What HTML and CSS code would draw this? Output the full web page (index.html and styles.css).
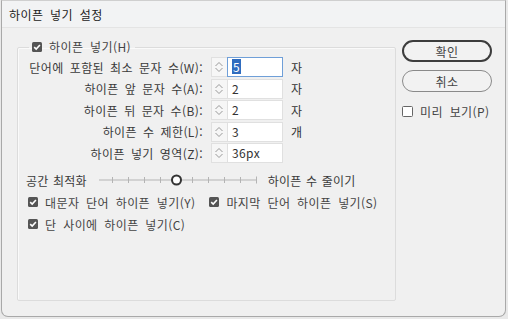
FILE: index.html
```html
<!DOCTYPE html>
<html lang="ko">
<head>
<meta charset="utf-8">
<link rel="stylesheet" href="styles.css">
</head>
<body>
<div class="dialog">
  <div class="titlebar">하이픈 넣기 설정</div>
  <div class="body">
    <fieldset class="group">
      <legend class="legend">
        <span class="cb on"><svg viewBox="0 0 10 10" width="10" height="10"><rect x="0" y="0" width="10" height="10" rx="1.5" fill="#555"/><path d="M2.2 5.2 L4.2 7.1 L7.9 3" stroke="#fff" stroke-width="1.6" fill="none"/></svg></span>
        <span>하이픈 넣기(H)</span>
      </legend>
      <div class="rows">
        <div class="row">
          <span class="lbl">단어에 포함된 최소 문자 수(W):</span>
          <span class="spin"><svg viewBox="0 0 16 20" width="16" height="20"><path d="M4.5 9 L8 5.5 L11.5 9 M4.5 11 L8 14.5 L11.5 11" stroke="#999" stroke-width="1" fill="none"/></svg></span>
          <span class="inp focus"><span class="sel">5</span></span>
          <span class="unit">자</span>
        </div>
        <div class="row">
          <span class="lbl">하이픈 앞 문자 수(A):</span>
          <span class="spin"><svg viewBox="0 0 16 20" width="16" height="20"><path d="M4.5 9 L8 5.5 L11.5 9 M4.5 11 L8 14.5 L11.5 11" stroke="#999" stroke-width="1" fill="none"/></svg></span>
          <span class="inp">2</span>
          <span class="unit">자</span>
        </div>
        <div class="row">
          <span class="lbl">하이픈 뒤 문자 수(B):</span>
          <span class="spin"><svg viewBox="0 0 16 20" width="16" height="20"><path d="M4.5 9 L8 5.5 L11.5 9 M4.5 11 L8 14.5 L11.5 11" stroke="#999" stroke-width="1" fill="none"/></svg></span>
          <span class="inp">2</span>
          <span class="unit">자</span>
        </div>
        <div class="row">
          <span class="lbl">하이픈 수 제한(L):</span>
          <span class="spin"><svg viewBox="0 0 16 20" width="16" height="20"><path d="M4.5 9 L8 5.5 L11.5 9 M4.5 11 L8 14.5 L11.5 11" stroke="#999" stroke-width="1" fill="none"/></svg></span>
          <span class="inp">3</span>
          <span class="unit">개</span>
        </div>
        <div class="row">
          <span class="lbl">하이픈 넣기 영역(Z):</span>
          <span class="spin"><svg viewBox="0 0 16 20" width="16" height="20"><path d="M4.5 9 L8 5.5 L11.5 9 M4.5 11 L8 14.5 L11.5 11" stroke="#999" stroke-width="1" fill="none"/></svg></span>
          <span class="inp">36px</span>
          <span class="unit"></span>
        </div>
      </div>
      <div class="slider-row">
        <span class="slbl">공간 최적화</span>
        <svg class="slider" viewBox="0 0 162 14" width="162" height="14">
          <path d="M1 7 H159" stroke="#b4b4b4" stroke-width="1"/>
          <path d="M14.5 4 V10 M30.5 4 V10 M46.5 4 V10 M62.5 4 V10 M94.5 4 V10 M110.5 4 V10 M126.5 4 V10 M142.5 4 V10 M158.5 3.5 V10.5" stroke="#b4b4b4" stroke-width="1"/>
          <circle cx="78.5" cy="7" r="4.5" fill="#fff" stroke="#333" stroke-width="2"/>
        </svg>
        <span class="slbl right">하이픈 수 줄이기</span>
      </div>
      <div class="checks">
        <div class="check-line">
          <span class="chk"><svg viewBox="0 0 10 10" width="10" height="10"><rect x="0" y="0" width="10" height="10" rx="1.5" fill="#555"/><path d="M2.2 5.2 L4.2 7.1 L7.9 3" stroke="#fff" stroke-width="1.6" fill="none"/></svg><span>대문자 단어 하이픈 넣기(Y)</span></span>
          <span class="chk second"><svg viewBox="0 0 10 10" width="10" height="10"><rect x="0" y="0" width="10" height="10" rx="1.5" fill="#555"/><path d="M2.2 5.2 L4.2 7.1 L7.9 3" stroke="#fff" stroke-width="1.6" fill="none"/></svg><span>마지막 단어 하이픈 넣기(S)</span></span>
        </div>
        <div class="check-line">
          <span class="chk"><svg viewBox="0 0 10 10" width="10" height="10"><rect x="0" y="0" width="10" height="10" rx="1.5" fill="#555"/><path d="M2.2 5.2 L4.2 7.1 L7.9 3" stroke="#fff" stroke-width="1.6" fill="none"/></svg><span>단 사이에 하이픈 넣기(C)</span></span>
        </div>
      </div>
    </fieldset>
    <div class="side">
      <button class="btn primary">확인</button>
      <button class="btn">취소</button>
      <span class="chk preview"><svg viewBox="0 0 11 11" width="11" height="11"><rect x="0.5" y="0.5" width="10" height="10" rx="1" fill="#fff" stroke="#666" stroke-width="1"/></svg><span>미리 보기(P)</span></span>
    </div>
  </div>
</div>
</body>
</html>
```

FILE: styles.css
```css
html, body {
  margin: 0;
  padding: 0;
  background: #e9e9e9;
}
body {
  font-family: "Noto Sans CJK KR", "Noto Sans", sans-serif;
  font-size: 12px;
  color: #3a3a3a;
  letter-spacing: 0.4px;
  word-spacing: 3px;
}
.dialog {
  box-sizing: border-box;
  width: 505px;
  height: 317px;
  margin: 0 0 0 1px;
  border: 1px solid #a9a9a9;
  border-top-color: #cfcfcf;
  border-radius: 0 0 7px 7px;
  background: #f0f0f0;
  display: flex;
  flex-direction: column;
  overflow: hidden;
}
.titlebar {
  height: 27px;
  box-sizing: border-box;
  padding: 6px 0 0 7px;
  line-height: 16px;
  font-size: 12px;
  color: #222;
  background: #f2f3f4;
  border-bottom: 1px solid #e4e4e4;
}
.body {
  display: flex;
  padding: 12px 0 0 15px;
}
.group {
  box-sizing: border-box;
  width: 379px;
  height: 261px;
  margin: 0;
  padding: 3px 0 0 0;
  border: 1px solid #dcdcdc;
  border-radius: 2px;
  box-shadow: 1px 1px 0 #fafafa inset;
}
.legend {
  margin-left: 11px;
  padding: 0 4px 0 3px;
  line-height: 14px;
  display: flex;
  align-items: center;
  gap: 7px;
  color: #444;
}
.cb {
  display: flex;
}
.rows {
  display: flex;
  flex-direction: column;
  gap: 1.5px;
}
.row {
  display: grid;
  grid-template-columns: 193px 16px 56px auto;
  align-items: center;
  height: 20px;
}
.lbl {
  text-align: right;
  white-space: nowrap;
  padding-right: 8px;
  word-spacing: 2.3px;
}
.spin {
  box-sizing: border-box;
  height: 20px;
  width: 16px;
  display: flex;
  background: #f6f6f6;
  border: 1px solid #e0e0e0;
  border-right: none;
  overflow: hidden;
}
.spin svg {
  margin-top: -1px;
  margin-left: -1px;
}
.inp {
  box-sizing: border-box;
  height: 20px;
  background: #fff;
  border: 1px solid #e0e0e0;
  padding: 0 0 0 4px;
  line-height: 18px;
  color: #333;
}
.inp.focus {
  border-color: #6f9fd8;
}
.sel {
  display: inline-block;
  background: #2f6cbf;
  color: #fff;
  padding: 0 1px;
  line-height: 15px;
}
.unit {
  padding-left: 8px;
  color: #333;
}
.slider-row {
  display: flex;
  align-items: center;
  height: 20px;
  margin-top: 7px;
  padding-left: 8px;
  letter-spacing: 0.2px;
  word-spacing: 1px;
}
.slider {
  margin-left: 11px;
}
.slbl.right {
  margin-left: 8px;
}
.checks {
  display: flex;
  flex-direction: column;
  gap: 2px;
  margin-top: 2px;
  padding-left: 10px;
}
.check-line {
  display: flex;
  height: 20px;
  align-items: center;
}
.chk {
  display: flex;
  align-items: center;
  gap: 7px;
  color: #444;
}
.chk.second {
  margin-left: 14px;
}
.side {
  display: flex;
  flex-direction: column;
  padding-left: 6px;
}
.btn {
  box-sizing: border-box;
  width: 90px;
  height: 22px;
  font-family: inherit;
  font-size: 12px;
  letter-spacing: 0.4px;
  color: #444;
  background: #f2f2f2;
  border: 1px solid #8a8a8a;
  border-radius: 11px;
  padding: 0;
  margin-bottom: 8px;
}
.btn.primary {
  border: 2px solid #3d3d3d;
}
.preview {
  margin-top: 3px;
  gap: 7px;
}
```
